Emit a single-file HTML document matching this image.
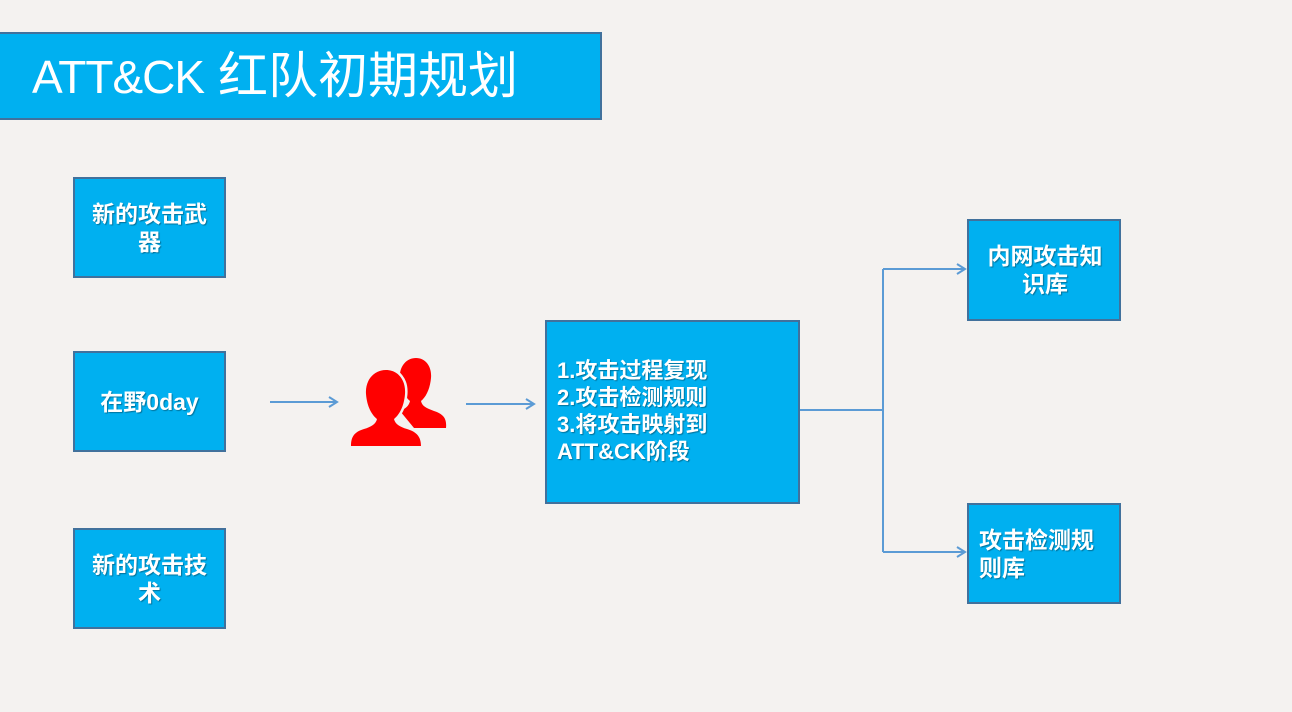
<!DOCTYPE html>
<html><head><meta charset="utf-8"><style>
html,body{margin:0;padding:0}
body{width:1292px;height:712px;position:relative;overflow:hidden;background:#f4f2f0;font-family:"Liberation Sans","Noto Sans CJK SC",sans-serif}
.b{position:absolute;background:#00b0f0;border:2px solid #41719c;box-sizing:border-box;color:#fff;font-weight:bold;font-size:23px;line-height:28px;display:flex;align-items:center;justify-content:center;text-align:center;padding:0 14px;text-shadow:1px 1px 1px rgba(0,0,0,.35)}
.t{position:absolute;left:-2px;top:32px;width:604px;height:88px;background:#00b0f0;border:2px solid #41719c;box-sizing:border-box;color:#fff;font-size:50px;line-height:84px;padding-left:32px}
</style></head><body>
<div class="t"><span style="font-size:46px;letter-spacing:-1px">ATT&amp;CK</span> 红队初期规划</div>
<div class="b" style="left:73px;top:177px;width:153px;height:101px">新的攻击武器</div>
<div class="b" style="left:73px;top:351px;width:153px;height:101px">在野0day</div>
<div class="b" style="left:73px;top:528px;width:153px;height:101px">新的攻击技术</div>
<div class="b" style="left:545px;top:320px;width:255px;height:184px;justify-content:flex-start;text-align:left;padding-left:10px;line-height:27px;align-items:flex-start;padding-top:35px;font-size:22px">1.攻击过程复现<br>2.攻击检测规则<br>3.将攻击映射到<br>ATT&amp;CK阶段</div>
<div class="b" style="left:967px;top:219px;width:154px;height:102px;padding:0 12px 0 14px">内网攻击知识库</div>
<div class="b" style="left:967px;top:503px;width:154px;height:101px;justify-content:flex-start;text-align:left;padding:0 20px 0 10px">攻击检测规则库</div>
<svg width="1292" height="712" style="position:absolute;left:0;top:0" fill="none" stroke="#5b9bd5" stroke-width="2">
<path d="M270 402H337M329 397l8 5-8 5"/>
<path d="M466 404H534M526 399l8 5-8 5"/>
<path d="M800 410H883M883 269V552M883 269H965M957 264l8 5-8 5M883 552H965M957 547l8 5-8 5"/>
<g fill="#ff0000" stroke="none">
<path d="M416 358c-10 0-17 9-16 20 1 11 5 19 10 23-1 5-5 8-10 10l14 17h32c1-10-3-14-12-17-8-3-12-5-13-10 5-4 9-12 10-23 1-11-5-20-15-20z"/>
<path d="M386 370c-12 0-21 10-20 24 1 13 6 21 11 25-1 5-6 8-13 10-10 3-13 8-13 17h70c0-9-4-14-14-17-7-2-12-5-13-10 5-4 10-12 11-25 1-14-7-24-19-24z" stroke="#f4f2f0" stroke-width="5" paint-order="stroke"/>
</g>
</svg>
</body></html>
